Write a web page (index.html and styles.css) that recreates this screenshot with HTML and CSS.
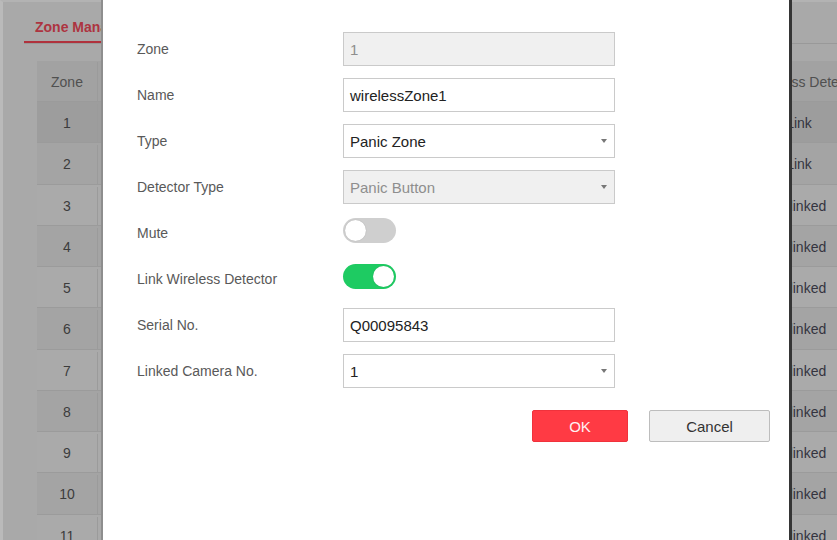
FILE: index.html
```
<!DOCTYPE html>
<html>
<head>
<meta charset="utf-8">
<link rel="stylesheet" href="styles.css">
</head>
<body>
<div class="backdrop">
  <div class="tabs"><div class="tab">Zone Management</div></div>
  <div class="grid">
    <div class="row head"><div class="c1">Zone</div><div class="c2">Name</div><div class="c3">Wireless Detector</div></div>
    <div class="row sel"><div class="c1">1</div><div class="c2"></div><div class="c3">Link</div></div>
    <div class="row even"><div class="c1">2</div><div class="c2"></div><div class="c3">Link</div></div>
    <div class="row odd"><div class="c1">3</div><div class="c2"></div><div class="c3">Unlinked</div></div>
    <div class="row even"><div class="c1">4</div><div class="c2"></div><div class="c3">Unlinked</div></div>
    <div class="row odd"><div class="c1">5</div><div class="c2"></div><div class="c3">Unlinked</div></div>
    <div class="row even"><div class="c1">6</div><div class="c2"></div><div class="c3">Unlinked</div></div>
    <div class="row odd"><div class="c1">7</div><div class="c2"></div><div class="c3">Unlinked</div></div>
    <div class="row even"><div class="c1">8</div><div class="c2"></div><div class="c3">Unlinked</div></div>
    <div class="row odd"><div class="c1">9</div><div class="c2"></div><div class="c3">Unlinked</div></div>
    <div class="row even"><div class="c1">10</div><div class="c2"></div><div class="c3">Unlinked</div></div>
    <div class="row odd"><div class="c1">11</div><div class="c2"></div><div class="c3">Unlinked</div></div>
  </div>
</div>

<div class="dialog">
  <div class="field"><div class="label">Zone</div><div class="control disabled">1</div></div>
  <div class="field"><div class="label">Name</div><div class="control">wirelessZone1</div></div>
  <div class="field"><div class="label">Type</div><div class="control">Panic Zone<span class="arrow"></span></div></div>
  <div class="field"><div class="label">Detector Type</div><div class="control disabled">Panic Button<span class="arrow"></span></div></div>
  <div class="field"><div class="label">Mute</div><div class="toggle"><span class="knob"></span></div></div>
  <div class="field"><div class="label">Link Wireless Detector</div><div class="toggle on"><span class="knob"></span></div></div>
  <div class="field"><div class="label">Serial No.</div><div class="control">Q00095843</div></div>
  <div class="field"><div class="label">Linked Camera No.</div><div class="control">1<span class="arrow"></span></div></div>
  <div class="buttons">
    <button class="btn ok">OK</button>
    <button class="btn cancel">Cancel</button>
  </div>
</div>
</body>
</html>
```
FILE: styles.css
```
html, body {
  margin: 0;
  padding: 0;
}
body {
  width: 837px;
  height: 540px;
  overflow: hidden;
  position: relative;
  font-family: "Liberation Sans", Arial, sans-serif;
}
.backdrop {
  height: 540px;
  box-sizing: border-box;
  background: #a9a9a9;
  border-left: 3px solid #bababa;
  border-top: 2px solid #b3b3b3;
  overflow: hidden;
}
.tabs {
  margin-left: 21px;
  height: 41px;
  border-bottom: 1px solid #999;
  display: flex;
}
.tab {
  box-sizing: border-box;
  height: 41px;
  padding: 16px 11px 0 11px;
  line-height: 18px;
  font-size: 14px;
  font-weight: bold;
  color: #ad3440;
  border-bottom: 2px solid #b0323d;
  white-space: nowrap;
  width: 140px;
}
.grid {
  margin-top: 17px;
  margin-left: 34px;
  width: 830px;
}
.row {
  display: flex;
  height: 41.25px;
  box-sizing: border-box;
  border-bottom: 1px solid #9b9b9b;
  align-items: stretch;
  padding-top: 2px;
}
.row.head {
  height: 41px;
  padding-top: 1px;
  background: #a2a2a2;
}
.row.sel { background: #9d9d9d; }
.row.even { background: #a4a4a4; }
.row.odd { background: #aaaaaa; }
.row > div {
  display: flex;
  align-items: center;
  justify-content: center;
  font-size: 14px;
  color: #3c3c3c;
  white-space: nowrap;
}
.row.head > div { color: #505050; }
.c1 {
  width: 60px;
  border-right: 1px solid #9b9b9b;
}
.c2 {
  width: 661px;
}
.c3 {
  width: 80px;
}
.row > .c3 { color: #34343f; }
.row.head > .c3 { padding-left: 8px; }

.dialog {
  position: absolute;
  left: 101px;
  top: 0;
  width: 691px;
  height: 540px;
  background: #fff;
  border-left: 2px solid #8e8e8e;
  border-right: 3px solid #353535;
  padding: 32px 0 0 34px;
  box-sizing: border-box;
}
.field {
  display: flex;
  align-items: center;
  height: 34px;
  margin-bottom: 12px;
}
.label {
  width: 206px;
  font-size: 14px;
  color: #595959;
}
.control {
  width: 272px;
  height: 34px;
  box-sizing: border-box;
  border: 1px solid #cacaca;
  padding: 0 7px 0 6px;
  font-size: 15px;
  color: #222;
  display: flex;
  align-items: center;
  background: #fff;
}
.control.disabled {
  background: #f0f0f0;
  color: #8e8e8e;
}
.arrow {
  margin-left: auto;
  width: 0;
  height: 0;
  border-left: 3px solid transparent;
  border-right: 3px solid transparent;
  border-top: 4px solid #777;
}
.toggle {
  width: 53px;
  height: 25px;
  border-radius: 13px;
  background: #cfcfcf;
  margin-bottom: 6px;
  display: flex;
  align-items: center;
  padding: 0 2px;
  box-sizing: border-box;
}
.toggle.on {
  background: #1ecb62;
  justify-content: flex-end;
}
.knob {
  width: 21px;
  height: 21px;
  border-radius: 50%;
  background: #fff;
  box-shadow: 0 0 1px rgba(0, 0, 0, 0.25);
}
.buttons {
  display: flex;
  justify-content: flex-end;
  gap: 21px;
  margin-top: 22px;
  padding-right: 19px;
}
.btn {
  height: 32px;
  font-family: "Liberation Sans", Arial, sans-serif;
  font-size: 15px;
  border-radius: 2px;
  padding: 0;
  margin: 0;
}
.ok {
  width: 96px;
  background: #ff3a44;
  color: #fff0f2;
  border: 1px solid #f0323c;
}
.cancel {
  width: 121px;
  background: #efefef;
  color: #333;
  border: 1px solid #bdbdbd;
}
```
